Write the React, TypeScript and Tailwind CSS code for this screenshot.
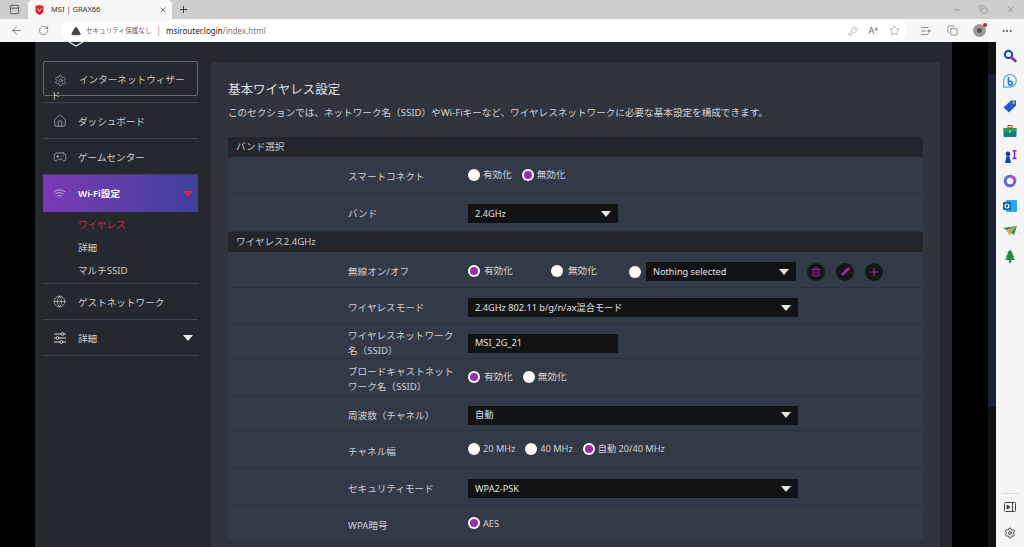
import type { ReactNode } from 'react';
import {
  ArrowLeft,
  Copy,
  Gamepad2,
  Globe,
  Home,
  KeyRound,
  ListPlus,
  Minus,
  MoreHorizontal,
  Pencil,
  PanelTop,
  Plus,
  RotateCw,
  Settings,
  Star,
  Trash2,
  TriangleAlert,
  Wifi,
  X,
} from 'lucide-react';

const Caret = ({ className = 'border-t-[#e4e4e4]' }: { className?: string }) => (
  <span className={`h-0 w-0 border-x-[5px] border-t-[6px] border-x-transparent ${className}`} />
);

const Radio = ({ on = false, label, className = '' }: { on?: boolean; label?: ReactNode; className?: string }) => (
  <span className={`flex items-center gap-[3px] ${className}`}>
    <span className="flex h-[12px] w-[12px] shrink-0 items-center justify-center rounded-full bg-white">
      {on && <span className="h-[8px] w-[8px] rounded-full bg-[#9c2ca8]" />}
    </span>
    {label && <span>{label}</span>}
  </span>
);

const Select = ({ value, wide = false, className = '' }: { value: string; wide?: boolean; className?: string }) => (
  <div
    className={`flex h-[19px] items-center justify-between bg-[#111214] pl-[7px] pr-[7px] text-[9.2px] text-[#e2e2e2] ${
      wide ? 'w-[330px]' : 'w-[150px]'
    } ${className}`}
  >
    <span>{value}</span>
    <Caret />
  </div>
);

const Row = ({ label, h, pt = 'pt-[4px]', children }: { label: string; h: string; pt?: string; children: ReactNode }) => (
  <div className={`flex items-center border-b border-[#2b303b] bg-[#333a47] pl-[120px] ${pt} ${h}`}>
    <div className="w-[120px] shrink-0 pr-2 leading-[15px] text-[#cfd0d4]">{label}</div>
    <div className="flex items-center text-[#cfd0d4]">{children}</div>
  </div>
);

const SectionHead = ({ children }: { children: ReactNode }) => (
  <div className="flex h-5 items-center bg-[#22252c] pl-[8px] text-[#c9cacd]">{children}</div>
);

const RoundBtn = ({ children }: { children: ReactNode }) => (
  <span className="flex h-[18px] w-[18px] items-center justify-center rounded-full bg-[#15161a] text-[#a530b4]">
    {children}
  </span>
);

const NavItem = ({ icon, label, caret }: { icon: ReactNode; label: string; caret?: boolean }) => (
  <div className="flex h-[36px] items-center border-b border-[#43464d] pl-[10px] pr-[4px] text-[#cfd0d4]">
    <span className="flex w-[25px] shrink-0 items-center text-[#d8d9dc]">{icon}</span>
    <span className="flex-1 pt-[3px]">{label}</span>
    {caret && <Caret className="mr-[1px] border-t-[#e8e8e8]" />}
  </div>
);

const SideIcons = () => (
  <div className="flex w-7 shrink-0 flex-col items-center gap-[9px] bg-[#f5f5f5] pt-[6px]">
    <svg width="16" height="16" viewBox="0 0 16 16" fill="none">
      <circle cx="6.500" cy="6.500" r="3.600" stroke="#1f4fc4" strokeWidth="2.200" />
      <path d="M9.500 9.500l4 3.500" stroke="#7a2cc4" strokeWidth="2.600" strokeLinecap="round" />
    </svg>
    <svg width="16" height="16" viewBox="0 0 16 16" fill="none">
      <path d="M8 1.500a6.300 6.300 0 1 1 0 12.600H1.700V8A6.300 6.300 0 0 1 8 1.500z" stroke="#4ba3ea" strokeWidth="1.200" />
      <path d="M6.400 4v6.200a2 2 0 1 0 2-2h-2" stroke="#2f6fd8" strokeWidth="1.500" />
    </svg>
    <svg width="16" height="16" viewBox="0 0 16 16">
      <path d="M1.500 9.500L9 2.500h5v5l-7 7z" fill="#1f5fc8" />
      <circle cx="11.500" cy="4.800" r="1.200" fill="#f2b84a" />
    </svg>
    <svg width="16" height="16" viewBox="0 0 16 16">
      <rect x="1.500" y="5" width="13" height="9" rx="1" fill="#0f7c8c" />
      <rect x="1.500" y="5" width="13" height="3.500" fill="#2b9d5e" />
      <rect x="6" y="2.500" width="4" height="2.500" fill="none" stroke="#7a5a2a" strokeWidth="1" />
      <rect x="7" y="7.500" width="2" height="2" fill="#f2c14a" />
    </svg>
    <svg width="16" height="16" viewBox="0 0 16 16">
      <circle cx="6" cy="6" r="2.400" fill="#1c3fa8" />
      <path d="M3 15l1.400-6.500h3.200L9 15z" fill="#1c3fa8" />
      <path d="M10.500 2h4v1.600h-1.200v6h1.200v1.600h-4V9.600h1.200v-6h-1.200z" fill="#8a2cc4" />
    </svg>
    <svg width="16" height="16" viewBox="0 0 16 16" fill="none">
      <circle cx="8" cy="8" r="4.800" stroke="#5a6cd8" strokeWidth="3" />
      <path d="M8 3.200a4.800 4.800 0 0 1 4.800 4.800" stroke="#c04ac8" strokeWidth="3" />
    </svg>
    <svg width="16" height="16" viewBox="0 0 16 16">
      <rect x="4" y="2" width="11" height="12" rx="1" fill="#28a8ea" />
      <rect x="1" y="4" width="8" height="8" rx="1" fill="#0f5fb0" />
      <circle cx="5" cy="8" r="2" fill="none" stroke="#fff" strokeWidth="1.200" />
    </svg>
    <svg width="16" height="16" viewBox="0 0 16 16">
      <path d="M1 5l14-2-3 9-4-3z" fill="#1f8a8a" />
      <path d="M4 7l11-4-6 6-1 4z" fill="#e0a92c" />
    </svg>
    <svg width="16" height="16" viewBox="0 0 16 16">
      <path d="M8 1.500l3 4h-1.200l2.700 3.500h-1.500L13 12H3l2-3H3.500l2.700-3.500H5z" fill="#1e8a4e" />
      <rect x="7" y="12" width="2" height="3" fill="#1e8a4e" />
    </svg>
    <div className="flex-1" />
    <div className="h-px w-[17px] bg-[#dcdcdc]" />
    <div className="mb-[8px] flex flex-col items-center gap-[14px] text-[#444]">
      <svg width="12" height="12" viewBox="0 0 12 12" fill="none" stroke="currentColor" className="-mt-[2px]">
        <rect x=".5" y="1.500" width="11" height="9" rx="1" />
        <path d="M8.500 2v8" />
        <path d="M3 4l3 2-3 2z" fill="currentColor" />
      </svg>
      <Settings size={12} />
    </div>
  </div>
);

export default function App() {
  return (
    <div
      className="flex h-[547px] w-[1024px] flex-col overflow-hidden bg-black text-[9.6px]"
      style={{ fontFamily: '"Noto Sans", "Noto Sans CJK JP", sans-serif' }}
    >
      {/* tab strip */}
      <div className="flex h-[19px] shrink-0 items-center bg-[#cdcdcd] text-[#333]">
        <span className="flex w-[28px] justify-center">
          <PanelTop size={11} strokeWidth={1.500} />
        </span>
        <div className="flex h-full w-[144px] items-center rounded-t-[4px] bg-[#f7f7f7] pl-[7px] pr-[5px] text-[7.500px]">
          <svg width="9" height="10" viewBox="0 0 9 10" className="mr-[7px]">
            <path d="M.5 1L4.500 0 8.500 1v4.500c0 2-2 3.500-4 4.500-2-1-4-2.500-4-4.500z" fill="#d9232e" />
            <path d="M2.500 3.500l2 3 2-3" stroke="#fff" strokeWidth=".8" fill="none" />
          </svg>
          <span className="flex-1">MSI | GRAX66</span>
          <X size={8} />
        </div>
        <Plus size={11} className="ml-[6px]" />
        <div className="flex-1" />
        <div className="flex items-center gap-[17px] pr-[8px] text-[#555]">
          <Minus size={10} strokeWidth={1} />
          <Copy size={9} strokeWidth={1} />
          <X size={11} strokeWidth={1} />
        </div>
      </div>
      {/* address bar */}
      <div className="flex h-[23px] shrink-0 items-center bg-[#f7f7f7] text-[#444]">
        <ArrowLeft size={13} strokeWidth={1.200} className="ml-[10px]" />
        <RotateCw size={11} strokeWidth={1.200} className="ml-[15px]" />
        <div className="ml-[11px] flex h-[20px] w-[848px] items-center rounded-full bg-white pl-[11px] pr-[8px] text-[8px]">
          <TriangleAlert size={10} fill="#444" stroke="#444" />
          <span className="ml-[5px] text-[6.600px] text-[#666]">セキュリティ保護なし</span>
          <span className="mx-[5px] text-[#888]">|</span>
          <span className="text-[#222]">msirouter.login</span>
          <span className="text-[#777]">/index.html</span>
          <div className="flex-1" />
          <div className="flex items-center gap-[11px] text-[#666]">
            <KeyRound size={10} strokeWidth={1} />
            <span className="text-[9px]">Aᴬ</span>
            <Star size={11} strokeWidth={1} />
          </div>
        </div>
        <div className="ml-[12px] flex items-center gap-[15px] text-[#444]">
          <ListPlus size={12} strokeWidth={1.200} />
          <Copy size={11} strokeWidth={1.200} />
          <span className="relative flex h-[13px] w-[13px] items-center justify-center rounded-full bg-[#9b9b9b]">
            <span className="h-[5px] w-[5px] rounded-full bg-[#555]" />
            <span className="absolute -right-[1px] -top-[1px] h-[4px] w-[4px] rounded-full bg-[#e21a1a]" />
          </span>
          <MoreHorizontal size={12} />
        </div>
      </div>
      {/* page */}
      <div className="flex min-h-0 flex-1">
        <div className="flex min-w-0 flex-1">
          <div className="w-[35px] shrink-0 bg-black" />
          <div className="relative flex w-[917px] shrink-0 bg-[#25282f]">
            <svg width="16" height="6" viewBox="0 0 16 6" fill="none" className="absolute left-[33px] top-0">
              <path d="M1 0l7 4 7-4" stroke="#e8e8e8" strokeWidth="1.200" />
            </svg>
            {/* sidebar */}
            <aside className="w-[176px] shrink-0 pl-[8px] pr-[13px] pt-[19px]">
              <div className="mb-[6px] h-[35px] rounded-[2px] border border-[#676a71] pl-[10px] pt-[10px] leading-[16px] text-[#c9cacd]">
                <div className="flex items-center">
                  <Settings size={13} strokeWidth={1} className="mr-[12px] shrink-0" />
                  <span className="whitespace-nowrap">インターネットウィザー</span>
                </div>
                <div className="-ml-[3px]">ド</div>
              </div>
              <div className="border-t border-[#43464d]" />
              <NavItem icon={<Home size={14} strokeWidth={1} />} label="ダッシュボード" />
              <NavItem icon={<Gamepad2 size={14} strokeWidth={1} />} label="ゲームセンター" />
              <div className="flex h-[37px] items-center bg-gradient-to-r from-[#7a38b2] to-[#3d409e] pl-[10px] pr-[4px] font-semibold text-white">
                <Wifi size={13} strokeWidth={1} className="mr-[12px] shrink-0" />
                <span className="flex-1 pt-[2px]">Wi-Fi設定</span>
                <Caret className="mr-[1px] border-t-[#e5213c]" />
              </div>
              <div className="grid h-[72px] grid-rows-3 items-center border-b border-[#43464d] pl-[35px] pt-[2px] text-[#c9cacd]">
                <span className="text-[#d1293f]">ワイヤレス</span>
                <span>詳細</span>
                <span>マルチSSID</span>
              </div>
              <NavItem icon={<Globe size={13} strokeWidth={1.200} />} label="ゲストネットワーク" />
              <NavItem
                icon={
                  <svg width="14" height="14" viewBox="0 0 14 14" fill="none" stroke="currentColor" strokeWidth="1">
                    <path d="M1 3h7M11 3h2M1 7h2M6 7h7M1 11h6M10 11h3" />
                    <circle cx="9.500" cy="3" r="1.400" />
                    <circle cx="4.500" cy="7" r="1.400" />
                    <circle cx="8.500" cy="11" r="1.400" />
                  </svg>
                }
                label="詳細"
                caret
              />
            </aside>
            {/* main panel */}
            <main className="mt-[20px] w-[729px] shrink-0 overflow-hidden bg-[#2f343f] pl-[17px] pr-[17px] pt-[19px]">
              <h1 className="text-[12.500px] leading-[17px] text-[#e3e4e6]">基本ワイヤレス設定</h1>
              <p className="mt-[7px] leading-[15px] text-[#d4d5d8]">
                このセクションでは、ネットワーク名（SSID）やWi-Fiキーなど、ワイヤレスネットワークに必要な基本設定を構成できます。
              </p>
              <div className="mt-[17px]">
                <SectionHead>バンド選択</SectionHead>
                <Row label="スマートコネクト" h="h-[37px]" pt="pt-[3px]">
                  <div className="-mt-[3px] flex items-center gap-[10px]">
                    <Radio label="有効化" />
                    <Radio on label="無効化" />
                  </div>
                </Row>
                <Row label="バンド" h="h-[38px]" pt="pt-[2px]">
                  <Select value="2.4GHz" />
                </Row>
                <SectionHead>ワイヤレス2.4GHz</SectionHead>
                <Row label="無線オン/オフ" h="h-[36px]">
                  <Radio on label="有効化" className="w-[83px] gap-[4px]" />
                  <Radio label="無効化" className="w-[78px] gap-[5px]" />
                  <Radio className="w-[17px]" />
                  <Select value="Nothing selected" className="w-[150px]" />
                  <div className="ml-[11px] flex items-center gap-[11px]">
                    <RoundBtn><Trash2 size={10} /></RoundBtn>
                    <RoundBtn><Pencil size={9} fill="currentColor" /></RoundBtn>
                    <RoundBtn><Plus size={12} /></RoundBtn>
                  </div>
                </Row>
                <Row label="ワイヤレスモード" h="h-[36px]">
                  <Select wide value="2.4GHz 802.11 b/g/n/ax混合モード" />
                </Row>
                <Row label="ワイヤレスネットワーク名（SSID）" h="h-[35px]">
                  <div className="flex h-[19px] w-[150px] items-center bg-[#111214] pl-[7px] text-[9.2px] text-[#e2e2e2]">MSI_2G_21</div>
                </Row>
                <Row label="ブロードキャストネットワーク名（SSID）" h="h-[37px]">
                  <div className="-mt-[4px] flex items-center gap-[10px]">
                    <Radio on label="有効化" className="gap-[4px]" />
                    <Radio label="無効化" />
                  </div>
                </Row>
                <Row label="周波数（チャネル）" h="h-[35px]">
                  <Select wide value="自動" />
                </Row>
                <Row label="チャネル幅" h="h-[37px]">
                  <div className="-mt-[4px] flex items-center gap-[10px] text-[9.2px]">
                    <Radio label="20 MHz" />
                    <Radio label="40 MHz" />
                    <Radio on label="自動 20/40 MHz" />
                  </div>
                </Row>
                <Row label="セキュリティモード" h="h-[38px]">
                  <Select wide value="WPA2-PSK" />
                </Row>
                <Row label="WPA暗号" h="h-[36px]">
                  <div className="-mt-[4px] text-[9.2px]">
                    <Radio on label="AES" />
                  </div>
                </Row>
              </div>
            </main>
            <div className="flex-1" />
          </div>
          <div className="flex-1 bg-black" />
          <div className="w-[8px] shrink-0 bg-[#111111]">
            <div className="mt-[32px] h-[333px] bg-[#1b2238]" />
          </div>
        </div>
        <SideIcons />
      </div>
    </div>
  );
}
